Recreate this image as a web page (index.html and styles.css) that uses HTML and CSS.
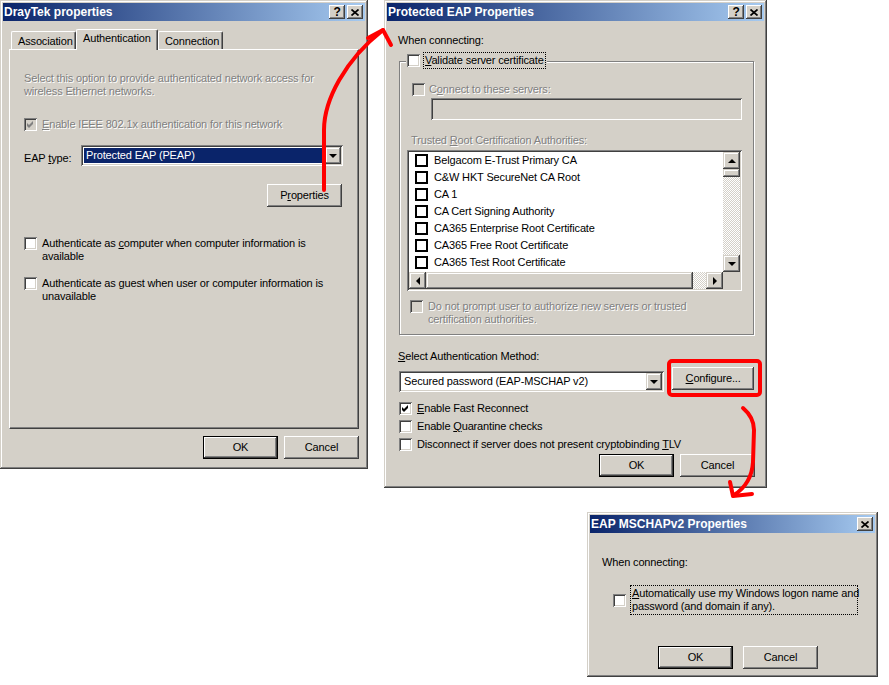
FILE: index.html
```html
<!DOCTYPE html>
<html lang="en">
<head>
  <meta charset="UTF-8" />
  <title>EAP Properties</title>
  <link rel="stylesheet" href="styles.css">
</head>
<body>
<div class="desktop">

  <!-- DrayTek properties -->
  <div class="window win-draytek">
    <div class="titlebar">
      <span class="title-text">DrayTek properties</span>
      <div class="title-buttons">
        <span class="tbtn help">?</span>
        <span class="tbtn"><svg width="8" height="7" viewBox="0 0 8 7"><path d="M0.5 0.5 L7.5 6.5 M7.5 0.5 L0.5 6.5" stroke="#000" stroke-width="1.7"/></svg></span>
      </div>
    </div>
    <div class="win-body draytek-body">
      <div class="tabs">
        <div class="tab tab-assoc">Association</div>
        <div class="tab tab-auth active">Authentication</div>
        <div class="tab tab-conn">Connection</div>
      </div>
      <div class="tab-panel">
        <p class="note dis-text">Select this option to provide authenticated network access for<br>wireless Ethernet networks.</p>
        <div class="check-row row-8021x">
          <span class="cb dis"><svg width="13" height="13" viewBox="0 0 13 13"><polygon points="3,5 5,7 9,3 9,6 5,10 3,8" fill="#808080"/></svg></span>
          <span class="dis-text"><u>E</u>nable IEEE 802.1x authentication for this network</span>
        </div>
        <div class="eap-row">
          <span class="eap-label">EAP <u>t</u>ype:</span>
          <div class="combo field combo-eap">
            <span class="combo-value selected">Protected EAP (PEAP)</span>
            <span class="combo-arrow"><span class="tri-down"></span></span>
          </div>
        </div>
        <div class="props-row"><button class="btn">P<u>r</u>operties</button></div>
        <div class="check-row row-computer">
          <span class="cb"></span>
          <span>Authenticate as <u>c</u>omputer when computer information is<br>available</span>
        </div>
        <div class="check-row row-guest">
          <span class="cb"></span>
          <span>Authenticate as <u>g</u>uest when user or computer information is<br>unavailable</span>
        </div>
      </div>
      <div class="dlg-buttons">
        <button class="btn default">OK</button>
        <button class="btn">Cancel</button>
      </div>
    </div>
  </div>

  <!-- Protected EAP Properties -->
  <div class="window win-peap">
    <div class="titlebar">
      <span class="title-text">Protected EAP Properties</span>
      <div class="title-buttons">
        <span class="tbtn help">?</span>
        <span class="tbtn"><svg width="8" height="7" viewBox="0 0 8 7"><path d="M0.5 0.5 L7.5 6.5 M7.5 0.5 L0.5 6.5" stroke="#000" stroke-width="1.7"/></svg></span>
      </div>
    </div>
    <div class="win-body peap-body">
      <div class="label-line">When connecting:</div>
      <div class="group">
        <div class="group-legend">
          <span class="cb"></span>
          <span class="focus-label"><u>V</u>alidate server certificate</span>
        </div>
        <div class="check-row row-connect">
          <span class="cb dis"></span>
          <span class="dis-text">C<u>o</u>nnect to these servers:</span>
        </div>
        <div class="text-input field"></div>
        <div class="dis-text trusted-label">Trusted <u>R</u>oot Certification Authorities:</div>
        <div class="listbox field">
          <div class="list-items">
            <div class="list-item"><span class="cb flat"></span>Belgacom E-Trust Primary CA</div>
            <div class="list-item"><span class="cb flat"></span>C&amp;W HKT SecureNet CA Root</div>
            <div class="list-item"><span class="cb flat"></span>CA 1</div>
            <div class="list-item"><span class="cb flat"></span>CA Cert Signing Authority</div>
            <div class="list-item"><span class="cb flat"></span>CA365 Enterprise Root Certificate</div>
            <div class="list-item"><span class="cb flat"></span>CA365 Free Root Certificate</div>
            <div class="list-item"><span class="cb flat"></span>CA365 Test Root Certificate</div>
          </div>
          <div class="vscroll">
            <span class="sbtn"><span class="tri-up"></span></span>
            <span class="thumb thumb-v"></span>
            <span class="track"></span>
            <span class="sbtn"><span class="tri-down"></span></span>
          </div>
          <div class="hscroll">
            <span class="sbtn"><span class="tri-left"></span></span>
            <span class="thumb thumb-h"></span>
            <span class="track"></span>
            <span class="sbtn"><span class="tri-right"></span></span>
          </div>
          <div class="scroll-corner"></div>
        </div>
        <div class="check-row row-prompt">
          <span class="cb dis"></span>
          <span class="dis-text">Do not <u>p</u>rompt user to authorize new servers or trusted<br>certification authorities.</span>
        </div>
      </div>
      <div class="label-line method-label"><u>S</u>elect Authentication Method:</div>
      <div class="method-row">
        <div class="combo field combo-method">
          <span class="combo-value">Secured password (EAP-MSCHAP v2)</span>
          <span class="combo-arrow"><span class="tri-down"></span></span>
        </div>
        <button class="btn btn-configure"><u>C</u>onfigure...</button>
      </div>
      <div class="check-row row-fast">
        <span class="cb"><svg width="13" height="13" viewBox="0 0 13 13"><polygon points="3,5 5,7 9,3 9,6 5,10 3,8" fill="#000"/></svg></span>
        <span><u>E</u>nable Fast Reconnect</span>
      </div>
      <div class="check-row row-opt">
        <span class="cb"></span>
        <span>Enable <u>Q</u>uarantine checks</span>
      </div>
      <div class="check-row row-opt">
        <span class="cb"></span>
        <span>Disconnect if server does not present cryptobinding <u>T</u>LV</span>
      </div>
      <div class="dlg-buttons peap-buttons">
        <button class="btn default">OK</button>
        <button class="btn">Cancel</button>
      </div>
    </div>
  </div>

  <!-- EAP MSCHAPv2 Properties -->
  <div class="window win-mschap">
    <div class="titlebar">
      <span class="title-text">EAP MSCHAPv2 Properties</span>
      <div class="title-buttons">
        <span class="tbtn"><svg width="8" height="7" viewBox="0 0 8 7"><path d="M0.5 0.5 L7.5 6.5 M7.5 0.5 L0.5 6.5" stroke="#000" stroke-width="1.7"/></svg></span>
      </div>
    </div>
    <div class="win-body mschap-body">
      <div class="label-line">When connecting:</div>
      <div class="auto-row">
        <span class="cb"></span>
        <span class="focus-label auto-label"><u>A</u>utomatically use my Windows logon name and<br>password (and domain if any).</span>
      </div>
      <div class="mschap-buttons">
        <button class="btn default">OK</button>
        <button class="btn">Cancel</button>
      </div>
    </div>
  </div>

  <!-- Red annotations -->
  <svg class="annotations" width="889" height="685" viewBox="0 0 889 685">
    <defs>
      <filter id="soft"><feGaussianBlur stdDeviation="0.6"/></filter>
    </defs>
    <g fill="none" stroke="#ff0000" stroke-width="4" stroke-linecap="round" stroke-linejoin="round" filter="url(#soft)">
      <path d="M324 190 L324 130 C324 100 345 60 383 30"/>
      <path d="M368 38 L383 30 L391 45"/>
      <rect x="669" y="361" width="91" height="34" rx="3"/>
      <path d="M743 408 C750 414 754 420 754 430 L753 462 C752 478 745 488 734 495"/>
      <path d="M730 482 L733 496 L752 494"/>
    </g>
  </svg>

</div>
</body>
</html>
```

FILE: styles.css
```css
* {
  box-sizing: border-box;
}

body {
  margin: 0;
  background: #fff;
  font-family: "Liberation Sans", Arial, sans-serif;
  font-size: 11px;
  line-height: 13px;
  letter-spacing: -0.15px;
  color: #000;
}

p {
  margin: 0;
}

.desktop {
  position: relative;
  width: 889px;
  height: 685px;
  overflow: hidden;
}

/* window frame */
.window {
  position: absolute;
  display: flex;
  flex-direction: column;
  padding: 3px;
  background: #d4d0c8;
  box-shadow: inset -1px -1px #404040, inset 1px 1px #d4d0c8,
              inset -2px -2px #808080, inset 2px 2px #fff;
}

.win-draytek { left: 0; top: 0; width: 368px; height: 469px; }
.win-peap { left: 384px; top: 0; width: 383px; height: 488px; }
.win-mschap { left: 587px; top: 512px; width: 291px; height: 165px; }

.titlebar {
  height: 18px;
  flex: none;
  display: flex;
  align-items: center;
  justify-content: space-between;
  padding: 0 2px 0 1px;
  background: linear-gradient(to right, #0a246a, #a6caf0);
  color: #fff;
  font-weight: bold;
}

.title-text {
  font-size: 12px;
  line-height: 18px;
  letter-spacing: 0;
}

.title-buttons {
  display: flex;
  gap: 2px;
}

.tbtn {
  width: 16px;
  height: 14px;
  display: flex;
  align-items: center;
  justify-content: center;
  background: #d4d0c8;
  color: #000;
  font-size: 12px;
  font-weight: bold;
  box-shadow: inset -1px -1px #404040, inset 1px 1px #fff,
              inset -2px -2px #808080, inset 2px 2px #d4d0c8;
}

.tbtn svg {
  display: block;
}

/* common controls */
.btn {
  width: 75px;
  height: 23px;
  padding: 0;
  border: 0;
  display: flex;
  align-items: center;
  justify-content: center;
  background: #d4d0c8;
  color: #000;
  font: inherit;
  letter-spacing: inherit;
  box-shadow: inset -1px -1px #404040, inset 1px 1px #fff,
              inset -2px -2px #808080, inset 2px 2px #d4d0c8;
}

.btn.default {
  box-shadow: inset 0 0 0 1px #000, inset -2px -2px #404040,
              inset 2px 2px #fff, inset -3px -3px #808080;
}

.field {
  background: #fff;
  box-shadow: inset 1px 1px #808080, inset -1px -1px #fff,
              inset 2px 2px #404040, inset -2px -2px #d4d0c8;
}

.cb {
  width: 13px;
  height: 13px;
  flex: none;
  background: #fff;
  box-shadow: inset 1px 1px #808080, inset -1px -1px #fff,
              inset 2px 2px #404040, inset -2px -2px #d4d0c8;
}

.cb svg {
  display: block;
}

.cb.dis {
  background: #d4d0c8;
}

.cb.flat {
  box-shadow: none;
  border: 2px solid #000;
}

.dis-text {
  color: #808080;
  text-shadow: 1px 1px 0 #fff;
}

.check-row {
  display: flex;
  align-items: flex-start;
  gap: 5px;
}

.focus-label {
  border: 1px dotted #000;
  padding: 1px;
  white-space: nowrap;
}

.combo {
  display: flex;
  height: 21px;
  padding: 2px;
}

.combo-value {
  flex: 1;
  display: flex;
  align-items: center;
  padding-left: 3px;
}

.combo-value.selected {
  margin: 1px 2px 1px 1px;
  padding-left: 2px;
  background: #0a246a;
  color: #fff;
}

.combo-arrow,
.sbtn {
  width: 16px;
  height: 17px;
  flex: none;
  display: flex;
  align-items: center;
  justify-content: center;
  background: #d4d0c8;
  box-shadow: inset -1px -1px #404040, inset 1px 1px #d4d0c8,
              inset -2px -2px #808080, inset 2px 2px #fff;
}

.tri-down,
.tri-up,
.tri-left,
.tri-right {
  width: 0;
  height: 0;
  border: 4px solid transparent;
}

.tri-down { border-top-color: #000; border-bottom-width: 0; margin-top: 1px; }
.tri-up { border-bottom-color: #000; border-top-width: 0; }
.tri-left { border-right-color: #000; border-left-width: 0; }
.tri-right { border-left-color: #000; border-right-width: 0; }

.dlg-buttons {
  display: flex;
  justify-content: flex-end;
  gap: 6px;
}

/* DrayTek dialog */
.draytek-body {
  padding: 8px 6px 0 6px;
}

.tabs {
  display: flex;
  align-items: flex-end;
  height: 20px;
  padding-left: 2px;
}

.tab {
  height: 18px;
  padding: 3px 0 0 6px;
  background: #d4d0c8;
  border-top: 1px solid #fff;
  border-left: 1px solid #fff;
  border-right: 1px solid #404040;
  border-radius: 2px 2px 0 0;
  box-shadow: inset -1px 0 #808080;
}

.tab-assoc { width: 65px; }
.tab-auth { width: 82px; }
.tab-conn { width: 65px; }

.tab.active {
  position: relative;
  z-index: 1;
  height: 21px;
  margin-bottom: -1px;
  padding-top: 2px;
}

.tab-panel {
  width: 350px;
  height: 380px;
  padding: 22px 15px 0 14px;
  border-top: 1px solid #fff;
  border-left: 1px solid #fff;
  border-right: 1px solid #404040;
  border-bottom: 1px solid #404040;
  box-shadow: inset -1px -1px #808080;
}

.row-8021x { margin-top: 20px; }

.eap-row {
  display: flex;
  margin-top: 14px;
}

.eap-label {
  width: 57px;
  padding-top: 7px;
}

.combo-eap {
  flex: 1;
}

.props-row {
  display: flex;
  justify-content: flex-end;
  margin-top: 18px;
  padding-right: 1px;
}

.row-computer { margin-top: 30px; }
.row-guest { margin-top: 14px; }

.draytek-body .dlg-buttons {
  margin-top: 7px;
}

/* Protected EAP dialog */
.peap-body {
  padding: 13px 10px 0 11px;
}

.group {
  width: 355px;
  margin: 14px 0 0 1px;
  padding: 0 11px 8px 11px;
  border: 1px solid #808080;
  box-shadow: inset 1px 1px #fff, 1px 1px 0 #fff;
}

.group-legend {
  display: flex;
  align-items: center;
  gap: 3px;
  width: max-content;
  margin: -10px 0 0 -5px;
  padding: 0 1px;
  background: #d4d0c8;
}

.row-connect {
  margin: 14px 0 0 1px;
  gap: 4px;
}

.text-input {
  width: 311px;
  height: 22px;
  margin: 2px 0 0 20px;
  background: #d4d0c8;
}

.trusted-label {
  margin-top: 14px;
}

.listbox {
  display: grid;
  grid-template-columns: 1fr 17px;
  grid-template-rows: 120px 17px;
  width: 335px;
  height: 141px;
  margin: 3px 0 0 -4px;
  padding: 2px;
}

.list-items {
  overflow: hidden;
}

.list-item {
  height: 17px;
  display: flex;
  align-items: center;
  gap: 6px;
  padding-left: 6px;
  white-space: nowrap;
}

.vscroll {
  display: flex;
  flex-direction: column;
}

.hscroll {
  display: flex;
}

.vscroll .sbtn,
.hscroll .sbtn {
  width: 17px;
  height: 17px;
}

.track {
  flex: 1;
  background: repeating-conic-gradient(#d4d0c8 0 25%, #fff 0 50%) 0 0 / 2px 2px;
}

.thumb {
  flex: none;
  background: #d4d0c8;
  box-shadow: inset -1px -1px #404040, inset 1px 1px #d4d0c8,
              inset -2px -2px #808080, inset 2px 2px #fff;
}

.thumb-v { height: 8px; }
.thumb-h { width: 267px; }

.scroll-corner {
  background: #d4d0c8;
}

.row-prompt {
  margin: 9px 0 0 -1px;
}

.method-label {
  margin-top: 15px;
}

.method-row {
  display: flex;
  gap: 8px;
  margin: 4px 0 0 1px;
}

.combo-method {
  width: 266px;
  margin-top: 4px;
}

.btn-configure {
  width: 82px;
}

.row-fast {
  margin: 10px 0 0 1px;
}

.row-opt {
  margin: 5px 0 0 1px;
}

.peap-buttons {
  margin: 3px -1px 0 0;
}

/* MSCHAPv2 dialog */
.mschap-body {
  padding: 23px 0 0 12px;
}

.auto-row {
  display: flex;
  align-items: center;
  gap: 4px;
  margin: 16px 0 0 11px;
}

.auto-label {
  width: 228px;
}

.mschap-buttons {
  display: flex;
  gap: 10px;
  margin: 31px 0 0 56px;
}

/* annotations drawn over the dialogs */
.annotations {
  position: absolute;
  left: 0;
  top: 0;
  z-index: 10;
  pointer-events: none;
}
```
